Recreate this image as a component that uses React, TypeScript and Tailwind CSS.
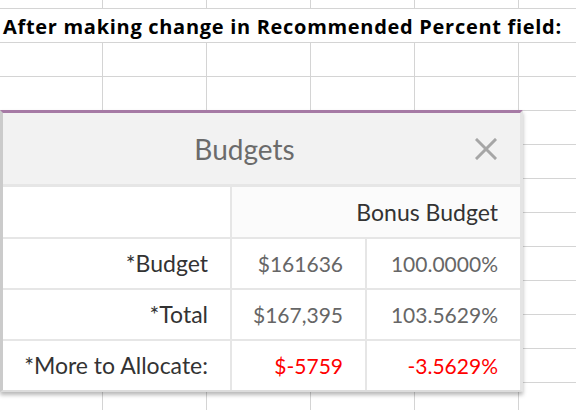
import React from "react";

const colWidths = ["w-[103px]", "w-[104px]", "w-[104px]", "w-[104px]", "w-[104px]", "w-[104px]"];

// one spreadsheet row of empty cells
function SheetRow({ h }: { h: string }) {
  return (
    <div className={`flex border-b border-[#d4d4d4] ${h}`}>
      {colWidths.map((w, i) => (
        <div key={i} className={`${w} shrink-0 border-r border-[#d4d4d4]`} />
      ))}
    </div>
  );
}

function CloseIcon() {
  return (
    <svg width="22" height="22" viewBox="0 0 22 22" className="shrink-0">
      <path d="M2 2 L20 20 M20 2 L2 20" stroke="#a6a6a6" strokeWidth="3" strokeLinecap="square" />
    </svg>
  );
}

type Row = { label: string; amount: string; pct: string; red?: boolean };

const rows: Row[] = [
  { label: "*Budget", amount: "$161636", pct: "100.0000%" },
  { label: "*Total", amount: "$167,395", pct: "103.5629%" },
  { label: "*More to Allocate:", amount: "$-5759", pct: "-3.5629%", red: true },
];

export default function App() {
  return (
    <div className="relative w-[576px] h-[410px] overflow-hidden bg-white">
      {/* spreadsheet behind */}
      <div className="flex flex-col">
        <SheetRow h="h-[9px]" />
        <div className="h-[34px] border-b border-[#d4d4d4] flex items-center pl-[3px] pt-[2px]">
          <span className="text-[20px] font-bold text-black whitespace-nowrap tracking-[0.7px]" style={{ fontFamily: '"Open Sans", "Noto Sans", sans-serif' }}>
            After making change in Recommended Percent field:
          </span>
        </div>
        {Array.from({ length: 11 }).map((_, i) => (
          <SheetRow key={i} h="h-[34px]" />
        ))}
      </div>

      {/* purple strip of the window behind the dialog */}
      <div className="absolute left-0 top-[110px] w-[3px] h-[51px] bg-[#a67aa5]" />

      {/* Budgets dialog */}
      <div
        className="absolute left-0 top-[110px] w-[523px] border-t-[3px] border-t-[#a67aa5] border-l-[3px] border-l-[#cbcbcb] border-r-[3px] border-r-[#e4e4e4] border-b-2 border-b-[#dcdcdc] bg-white shadow-[0_3px_4px_rgba(0,0,0,0.28)]"
        style={{ fontFamily: "Lato, sans-serif" }}
      >
        <div className="h-[74px] bg-[#f2f2f2] border-b-[3px] border-[#e6e6e6] flex items-center pl-[11px]">
          <div className="flex-1 text-center text-[28px] text-[#6b6b6b]">Budgets</div>
          <div className="mr-[23px]">
            <CloseIcon />
          </div>
        </div>

        <div className="flex h-[52px] border-b-2 border-[#e6e6e6]">
          <div className="w-[229px] shrink-0 border-r-2 border-[#e6e6e6]" />
          <div className="flex-1 bg-[#fbfbfb] flex items-center justify-end pr-[22px] text-[23px] text-[#333333]">
            Bonus Budget
          </div>
        </div>

        {rows.map((r, i) => (
          <div
            key={r.label}
            className={`flex ${i < rows.length - 1 ? "h-[51px] border-b-2 border-[#e6e6e6]" : "h-[49px]"}`}
          >
            <div className="w-[229px] shrink-0 border-r-2 border-[#e6e6e6] flex items-center justify-end pr-[22px] text-[23px] text-[#333333]">
              {r.label}
            </div>
            <div
              className={`w-[135px] shrink-0 border-r-2 border-[#e6e6e6] flex items-center justify-end pr-[22px] text-[21px] ${r.red ? "text-[#ff0000]" : "text-[#666666]"}`}
            >
              {r.amount}
            </div>
            <div className={`flex-1 flex items-center justify-end pr-[22px] text-[21px] ${r.red ? "text-[#ff0000]" : "text-[#666666]"}`}>
              {r.pct}
            </div>
          </div>
        ))}
      </div>
    </div>
  );
}
